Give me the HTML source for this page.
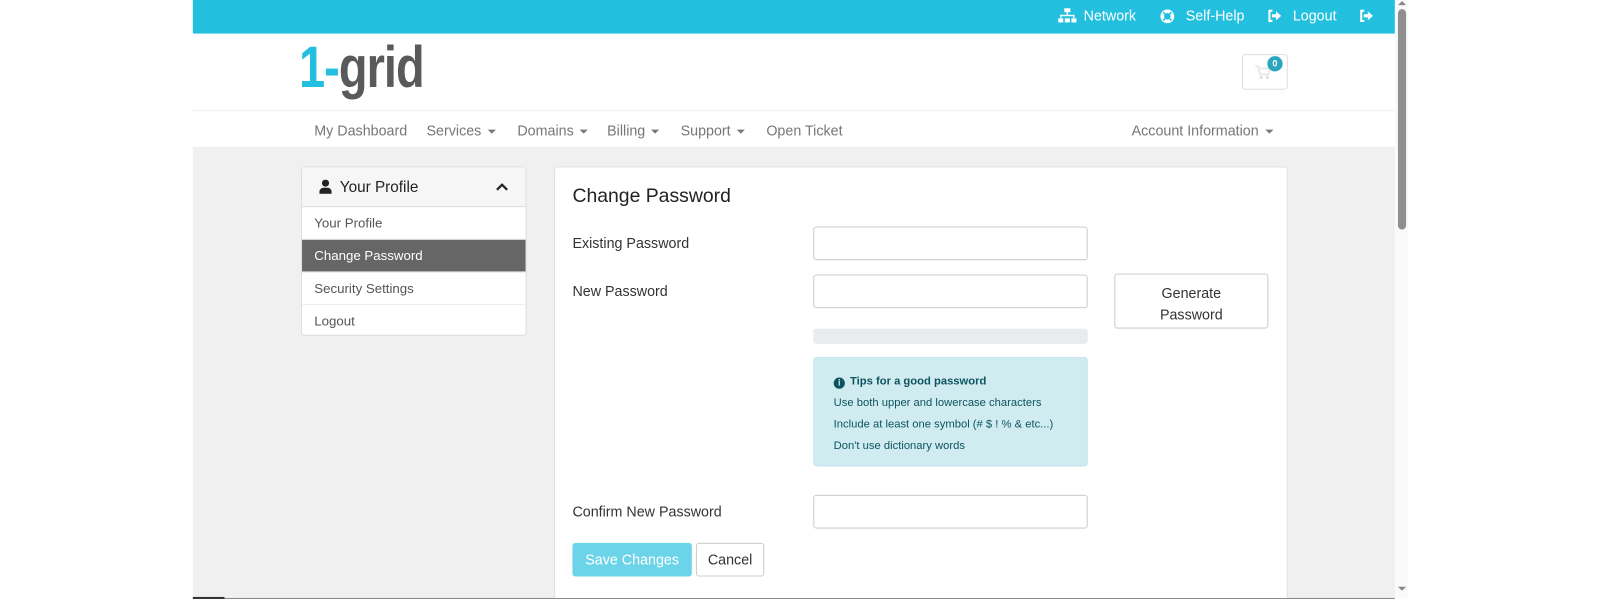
<!DOCTYPE html>
<html><head><style>
*{box-sizing:border-box;margin:0;padding:0}
body{width:1600px;height:600px;background:#fff;font-family:"Liberation Sans",sans-serif;position:relative;overflow:hidden;color:#222}
#w{position:absolute;left:0;top:0;width:1568px;height:588px;transform:scale(1.0204);transform-origin:0 0}
.a{position:absolute}
.top{left:189px;top:0;width:1178px;height:33px;background:#22bfdf;color:#fff;font-size:14px}
.top span{position:absolute;top:7px}
.hdr{left:189px;top:33px;width:1178px;height:75px;background:#fff}
.nav{left:189px;top:108px;width:1178px;height:37px;background:#fff;border-top:1px solid #eee;border-bottom:1px solid #eee;font-size:14px;color:#777}
.nav span{position:absolute;top:11px}
.car{display:inline-block;width:0;height:0;border-left:4px solid transparent;border-right:4px solid transparent;border-top:4px solid #777;vertical-align:middle;margin-left:6px}
.bg{left:189px;top:145px;width:1178px;height:441px;background:#f0f0f0}
.side{left:295px;top:163px;width:221px;height:166px;background:#fff;border:1px solid #ddd;border-radius:3px;font-size:13px;color:#555}
.side .h{height:39px;background:#f6f6f6;border-bottom:1px solid #ddd;font-size:15px;color:#222;padding:11px 0 0 37px;position:relative}
.side .i{height:32px;padding:8px 0 0 12px;border-bottom:1px solid #eee}
.side .act{background:#666;color:#fff}
.main{left:543px;top:163px;width:719px;height:423px;background:#fff;border:1px solid #ddd;border-bottom:none;border-radius:3px 3px 0 0}
.lbl{font-size:14px;color:#333;left:561px}
.inp{left:797px;width:269px;height:33px;border:1px solid #ccc;border-radius:3px;background:#fff}
.btn{font-size:14px;border-radius:3px;text-align:center}
</style></head><body><div id="w">
<div class="a top">
<svg class="a" style="left:848px;top:8px" width="18" height="15" viewBox="0 0 18 15" fill="#fff"><rect x="6" y="0" width="6" height="4"/><rect x="8.3" y="4" width="1.4" height="3"/><rect x="2" y="6.5" width="14" height="1.4"/><rect x="2" y="6.5" width="1.4" height="3"/><rect x="14.6" y="6.5" width="1.4" height="3"/><rect x="0" y="10" width="5" height="4"/><rect x="6.5" y="10" width="5" height="4"/><rect x="13" y="10" width="5" height="4"/></svg>
<span style="left:873px">Network</span>
<svg class="a" style="left:948px;top:9px" width="14" height="14" viewBox="0 0 14 14"><circle cx="7" cy="7" r="5" fill="none" stroke="#fff" stroke-width="3.5"/><path d="M3 3l2 2M11 3l-2 2M3 11l2-2M11 11l-2-2" stroke="#22bfdf" stroke-width="1.5"/></svg>
<span style="left:973px">Self-Help</span>
<svg class="a" style="left:1053px;top:9px" width="14" height="13" viewBox="0 0 14 13"><path d="M5 1.5H2v10h3" fill="none" stroke="#fff" stroke-width="2"/><path d="M4.5 5h4V2l5 4.5-5 4.5V8h-4z" fill="#fff"/></svg>
<span style="left:1078px">Logout</span>
<svg class="a" style="left:1143px;top:9px" width="14" height="13" viewBox="0 0 14 13"><path d="M5 1.5H2v10h3" fill="none" stroke="#fff" stroke-width="2"/><path d="M4.5 5h4V2l5 4.5-5 4.5V8h-4z" fill="#fff"/></svg>
</div>
<div class="a hdr">
<div class="a" style="left:104px;top:4px;font-size:50px;font-weight:bold;letter-spacing:-1px;line-height:50px;transform:scale(0.92,1.15);transform-origin:0 0"><span style="color:#22bfdf">1-</span><span style="color:#5a595c">grid</span></div>
<div class="a" style="left:1028px;top:20px;width:45px;height:35px;border:1px solid #ddd;border-radius:3px"></div>
<svg class="a" style="left:1041px;top:31px" width="16" height="14" viewBox="0 0 16 14" fill="#ddd"><path d="M0 1h3l2 8h8l2-6H5" fill="none" stroke="#e8e8e8" stroke-width="2"/><circle cx="6" cy="12" r="1.5"/><circle cx="12" cy="12" r="1.5"/></svg>
<div class="a" style="left:1053px;top:22px;width:15px;height:15px;border-radius:50%;background:#2aa6bf;color:#fff;font-size:9px;font-weight:bold;text-align:center;line-height:15px">0</div>
</div>
<div class="a nav">
<span style="left:119px">My Dashboard</span>
<span style="left:229px">Services<i class="car"></i></span>
<span style="left:318px">Domains<i class="car"></i></span>
<span style="left:406px">Billing<i class="car"></i></span>
<span style="left:478px">Support<i class="car"></i></span>
<span style="left:562px">Open Ticket</span>
<span style="left:920px">Account Information<i class="car"></i></span>
</div>
<div class="a bg"></div>
<div class="a" style="left:189px;top:586px;width:1178px;height:14px;background:#fff;border-top:1px solid #888"></div>
<div class="a" style="left:189px;top:585px;width:31px;height:2px;background:#333"></div>
<div class="a side">
<div class="h"><svg class="a" style="left:17px;top:12px" width="12" height="14" viewBox="0 0 12 14" fill="#222"><circle cx="6" cy="3.5" r="3.5"/><path d="M0 14v-2a4 4 0 0 1 4-4h4a4 4 0 0 1 4 4v2z"/></svg>Your Profile
<svg class="a" style="left:190px;top:15px" width="12" height="8" viewBox="0 0 12 8"><path d="M1 7l5-5 5 5" fill="none" stroke="#222" stroke-width="2.2"/></svg></div>
<div class="i">Your Profile</div>
<div class="i act">Change Password</div>
<div class="i">Security Settings</div>
<div class="i" style="border:none">Logout</div>
</div>
<div class="a main"></div>
<div class="a" style="left:561px;top:182px;font-size:19px;color:#222">Change Password</div>
<div class="a lbl" style="top:230px">Existing Password</div>
<div class="a inp" style="top:222px"></div>
<div class="a lbl" style="top:277px">New Password</div>
<div class="a inp" style="top:269px"></div>
<div class="a btn" style="left:1092px;top:268px;width:151px;height:54px;border:1px solid #ccc;padding-top:8px;line-height:21px;color:#333">Generate<br>Password</div>
<div class="a" style="left:797px;top:322px;width:269px;height:15px;background:#e9ecef;border-radius:3px"></div>
<div class="a" style="left:797px;top:350px;width:269px;height:107px;background:#d1ecf1;border:1px solid #bee5eb;border-radius:3px;color:#0c5460;font-size:11px;padding:13px 0 0 19px;line-height:21px">
<div style="font-weight:bold"><span style="display:inline-block;width:11px;height:11px;border-radius:50%;background:#0c5460;color:#d1ecf1;font-size:9px;text-align:center;line-height:11px;margin-right:5px;vertical-align:-1px">i</span>Tips for a good password</div>
<div>Use both upper and lowercase characters</div>
<div>Include at least one symbol (# $ ! % &amp; etc...)</div>
<div>Don't use dictionary words</div>
</div>
<div class="a lbl" style="top:493px">Confirm New Password</div>
<div class="a inp" style="top:485px"></div>
<div class="a btn" style="left:561px;top:532px;width:117px;height:33px;background:#6cd4e9;color:#fff;line-height:33px">Save Changes</div>
<div class="a btn" style="left:682px;top:532px;width:67px;height:33px;border:1px solid #ccc;color:#333;line-height:31px">Cancel</div>
<div class="a" style="left:1367px;top:0;width:13px;height:586px;background:#fafafa"></div>
<div class="a" style="left:1370px;top:9px;width:8px;height:216px;background:#8f8f8f;border-radius:4px"></div>
<div class="a" style="left:1370px;top:1px;width:0;height:0;border-left:4px solid transparent;border-right:4px solid transparent;border-bottom:4px solid #888"></div>
<div class="a" style="left:1370px;top:575px;width:0;height:0;border-left:4px solid transparent;border-right:4px solid transparent;border-top:4px solid #888"></div>
</div></body></html>
